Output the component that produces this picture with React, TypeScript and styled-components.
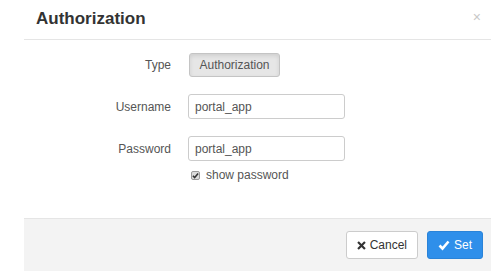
import React, { useState } from 'react';
import styled, { createGlobalStyle } from 'styled-components';

const GlobalStyle = createGlobalStyle`
  html, body {
    margin: 0;
    padding: 0;
    background: #ffffff;
    font-family: "Liberation Sans", Arial, sans-serif;
    overflow: hidden;
  }
`;

const Modal = styled.div`
  margin-left: 24px;
  width: 467px;
  height: 271px;
  background: #ffffff;
  display: flex;
  flex-direction: column;
`;

const Header = styled.div`
  height: 39px;
  border-bottom: 1px solid #e5e5e5;
  display: flex;
  align-items: center;
  justify-content: space-between;
  padding: 0 10px 0 12px;
`;

const Title = styled.h4`
  margin: 0 0 2px;
  font-size: 17px;
  font-weight: bold;
  color: #333333;
`;

const Close = styled.button`
  border: none;
  background: none;
  padding: 0;
  color: #c8c8c8;
  font-size: 14px;
  line-height: 1;
  margin-bottom: 6px;
  cursor: pointer;
`;

const Body = styled.div`
  flex: 1;
  padding-top: 13px;
  display: flex;
  flex-direction: column;
`;

const Row = styled.div<{ $gap: number }>`
  display: flex;
  align-items: center;
  margin-bottom: ${(p) => p.$gap}px;
`;

const Label = styled.label`
  width: 147px;
  text-align: right;
  padding-right: 17px;
  font-size: 12px;
  color: #555555;
`;

const TypeButton = styled.button`
  width: 91px;
  height: 24px;
  margin-left: 1px;
  border: 1px solid #c4c4c4;
  border-radius: 3px;
  background: #e6e6e6;
  box-shadow: inset 0 2px 4px rgba(0, 0, 0, 0.1);
  font-family: inherit;
  font-size: 12px;
  color: #555555;
  padding: 0;
`;

const Input = styled.input`
  box-sizing: border-box;
  width: 157px;
  height: 25px;
  border: 1px solid #cccccc;
  border-radius: 3px;
  padding: 0 6px;
  font-family: inherit;
  font-size: 12px;
  color: #555555;
  outline: none;
`;

const CheckRow = styled.label`
  display: flex;
  align-items: center;
  margin-left: 167px;
  margin-top: -10px;
  font-size: 12px;
  color: #555555;
  cursor: pointer;
`;

const CheckBox = styled.span`
  box-sizing: border-box;
  width: 9px;
  height: 9px;
  border: 1px solid #9a9a9a;
  border-radius: 2px;
  background: #dcdcdc;
  margin-right: 6px;
  display: flex;
  align-items: center;
  justify-content: center;
`;

const Footer = styled.div`
  height: 53px;
  box-sizing: border-box;
  border-top: 1px solid #e5e5e5;
  background: #f3f3f3;
  display: flex;
  justify-content: flex-end;
  align-items: flex-start;
  padding: 12px 8px 0 0;
  gap: 9px;
`;

const FooterButton = styled.button<{ $primary?: boolean }>`
  height: 28px;
  box-sizing: border-box;
  padding: 0 10px;
  border-radius: 3px;
  border: 1px solid ${(p) => (p.$primary ? '#2a83d8' : '#cccccc')};
  background: ${(p) => (p.$primary ? '#2f8fea' : '#ffffff')};
  color: ${(p) => (p.$primary ? '#ffffff' : '#333333')};
  font-family: inherit;
  font-size: 12px;
  display: flex;
  align-items: center;
  gap: 4px;
  cursor: pointer;
`;

const TimesIcon = () => (
  <svg width="9" height="9" viewBox="0 0 10 10">
    <path d="M2 2 L8 8 M8 2 L2 8" stroke="#333" strokeWidth="2.4" strokeLinecap="square" />
  </svg>
);

const CheckIcon = ({ color, size }: { color: string; size: number }) => (
  <svg width={size} height={size} viewBox="0 0 12 12">
    <path d="M1.5 6.5 L4.5 9.5 L10.5 2.5" fill="none" stroke={color} strokeWidth="2.6" />
  </svg>
);

export default function App() {
  const [show, setShow] = useState(true);

  return (
    <>
      <GlobalStyle />
      <Modal>
        <Header>
          <Title>Authorization</Title>
          <Close>×</Close>
        </Header>
        <Body>
          <Row $gap={17}>
            <Label>Type</Label>
            <TypeButton>Authorization</TypeButton>
          </Row>
          <Row $gap={17}>
            <Label>Username</Label>
            <Input defaultValue="portal_app" />
          </Row>
          <Row $gap={17}>
            <Label>Password</Label>
            <Input type={show ? 'text' : 'password'} defaultValue="portal_app" />
          </Row>
          <CheckRow onClick={() => setShow(!show)}>
            <CheckBox>{show && <CheckIcon color="#333" size={7} />}</CheckBox>
            show password
          </CheckRow>
        </Body>
        <Footer>
          <FooterButton>
            <TimesIcon /> Cancel
          </FooterButton>
          <FooterButton $primary>
            <CheckIcon color="#ffffff" size={12} /> Set
          </FooterButton>
        </Footer>
      </Modal>
    </>
  );
}
